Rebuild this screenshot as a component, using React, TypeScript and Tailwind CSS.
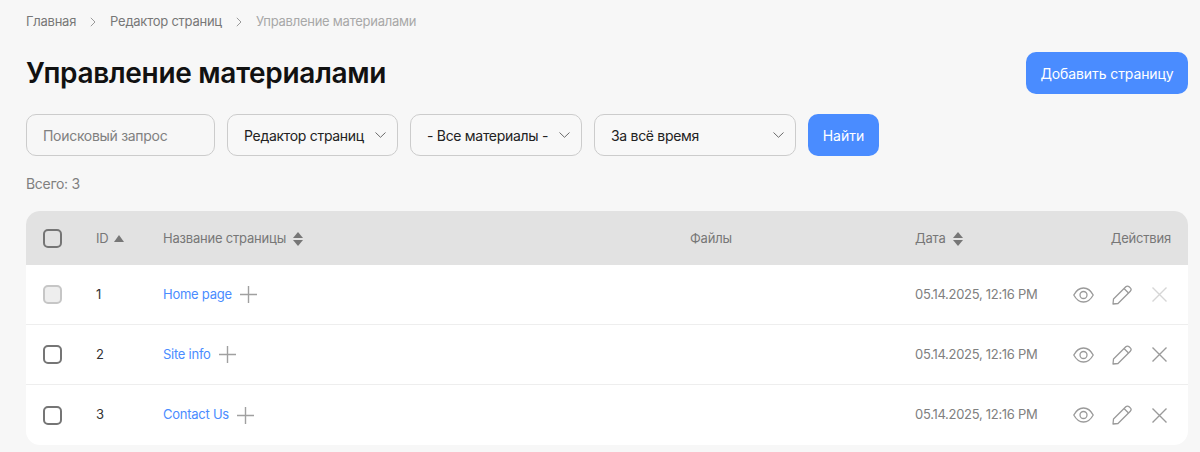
import { ReactNode } from "react";

function Chevron() {
  return (
    <svg width="11" height="6" viewBox="0 0 11 6" fill="none" stroke="#6b6b6b" strokeWidth="1" className="shrink-0">
      <path d="M0.5 0.5 5.500 5.300 10.500 0.500" />
    </svg>
  );
}

function Crumb() {
  return (
    <svg width="6" height="10" viewBox="0 0 6 10" fill="none" stroke="#9a9a9a" strokeWidth="1" className="mx-[14px]">
      <path d="M0.8 0.8 5 5 0.8 9.2" />
    </svg>
  );
}

function Check({ disabled }: { disabled?: boolean }) {
  return disabled ? (
    <div className="w-[19px] h-[19px] rounded-[5px] border-2 border-[#c6c6c6] bg-[#eeeeee]" />
  ) : (
    <div className="w-[19px] h-[19px] rounded-[5px] border-2 border-[#757575]" />
  );
}

function Plus() {
  return (
    <svg width="17" height="17" viewBox="0 0 17 17" stroke="#a0a0a0" strokeWidth="1.4">
      <path d="M8.500 0v17M0 8.500h17" />
    </svg>
  );
}

function Sort({ only }: { only?: boolean }) {
  return only ? (
    <svg width="10" height="7" viewBox="0 0 10 7" fill="#777777">
      <path d="M5 0 10 7H0z" />
    </svg>
  ) : (
    <svg width="10" height="14" viewBox="0 0 10 14" fill="#777777">
      <path d="M5 0 10 6H0z" />
      <path d="M5 14 0 8h10z" />
    </svg>
  );
}

function Actions({ faded }: { faded?: boolean }) {
  return (
    <div className="flex items-center justify-end">
      <svg width="21" height="16" viewBox="0 0 21 16" fill="none" stroke="#9a9a9a" strokeWidth="1.3" className="mr-[18px]">
        <path d="M.8 8C3.200 3.500 6.600 1 10.500 1s7.300 2.500 9.700 7c-2.400 4.500-5.800 7-9.700 7S3.200 12.500.8 8z" />
        <circle cx="10.500" cy="8" r="3.500" />
      </svg>
      <svg width="20" height="20" viewBox="0 0 20 20" fill="none" stroke="#9a9a9a" strokeWidth="1.3" strokeLinejoin="round" className="mr-[20px]">
        <path d="M1 19 1.500 14 13.800 1.700c.9-.9 2.400-.9 3.300 0l1.200 1.200c.9.900.9 2.400 0 3.300L6 18.500z" />
        <path d="M12 3.500 16.500 8" />
      </svg>
      <svg width="15" height="15" viewBox="0 0 15 15" fill="none" stroke={faded ? "#d6d6d6" : "#9a9a9a"} strokeWidth="1.4">
        <path d="M.5.500 14.500 14.500M14.500.500.500 14.500" />
      </svg>
    </div>
  );
}

function Select({ className, children }: { className: string; children: ReactNode }) {
  return (
    <div className={"h-[42px] rounded-[10px] border border-[#cccccc] bg-[#f8f8f8] flex items-center justify-between pl-[16px] pr-[11px] text-[14px] tracking-[-0.3px] text-[#222222] " + className}>
      <span>{children}</span>
      <Chevron />
    </div>
  );
}

const rows = [
  { id: 1, name: "Home page", disabled: true },
  { id: 2, name: "Site info" },
  { id: 3, name: "Contact Us" },
];

const cols = "grid grid-cols-[70px_67px_527px_225px_1fr] items-center";

export default function App() {
  return (
    <div className="min-h-[452px] bg-[#f7f7f7] pl-[26px] pr-[12px] pt-[14px] font-['Inter',sans-serif] overflow-hidden">
      <div className="flex items-center h-[16px] text-[13px] tracking-[-0.25px] text-[#777777]">
        <span>Главная</span>
        <Crumb />
        <span>Редактор страниц</span>
        <Crumb />
        <span className="text-[#a8a8a8]">Управление материалами</span>
      </div>

      <div className="flex items-center justify-between mt-[22px]">
        <h1 className="text-[28px] leading-[36px] font-semibold text-[#111111] tracking-[-0.3px]">Управление материалами</h1>
        <button className="h-[42px] w-[162px] rounded-[10px] bg-[#4a8cff] text-white text-[14px] tracking-[-0.1px]">Добавить страницу</button>
      </div>

      <div className="flex items-center gap-[12px] mt-[20px]">
        <div className="h-[42px] w-[189px] rounded-[10px] border border-[#cccccc] flex items-center pl-[16px] text-[14px] tracking-[-0.3px] text-[#808080]">
          Поисковый запрос
        </div>
        <Select className="w-[171px]">Редактор страниц</Select>
        <Select className="w-[172px]">- Все материалы -</Select>
        <Select className="w-[202px]">За всё время</Select>
        <button className="h-[42px] w-[71px] rounded-[10px] bg-[#4a8cff] text-white text-[14px]">Найти</button>
      </div>

      <div className="mt-[20px] text-[14px] tracking-[-0.3px] leading-[16px] text-[#808080]">Всего: 3</div>

      <div className="mt-[19px] rounded-[14px] bg-white overflow-hidden">
        <div className={cols + " h-[54px] pt-px bg-[#e2e2e2] text-[13px] tracking-[-0.2px] text-[#777777]"}>
          <div className="pl-[17px]"><Check /></div>
          <div className="flex items-center gap-[6px]">ID <Sort only /></div>
          <div className="flex items-center gap-[7px]">Название страницы <Sort /></div>
          <div>Файлы</div>
          <div className="flex items-center justify-between pr-[17px]">
            <span className="flex items-center gap-[7px]">Дата <Sort /></span>
            <span>Действия</span>
          </div>
        </div>
        {rows.map((r, i) => (
          <div key={r.id} className={cols + " h-[60px] text-[13px] tracking-[-0.25px] " + (i < 2 ? "border-b border-[#eeeeee]" : "")}>
            <div className="pl-[17px]"><Check disabled={r.disabled} /></div>
            <div className="text-[#333333]">{r.id}</div>
            <div className="flex items-center gap-[8px] text-[#4a8cff]">{r.name} <Plus /></div>
            <div />
            <div className="flex items-center justify-between pr-[21px] text-[#808080]">
              <span className="tracking-[-0.3px]">05.14.2025, 12:16 PM</span>
              <Actions faded={r.disabled} />
            </div>
          </div>
        ))}
      </div>
    </div>
  );
}
